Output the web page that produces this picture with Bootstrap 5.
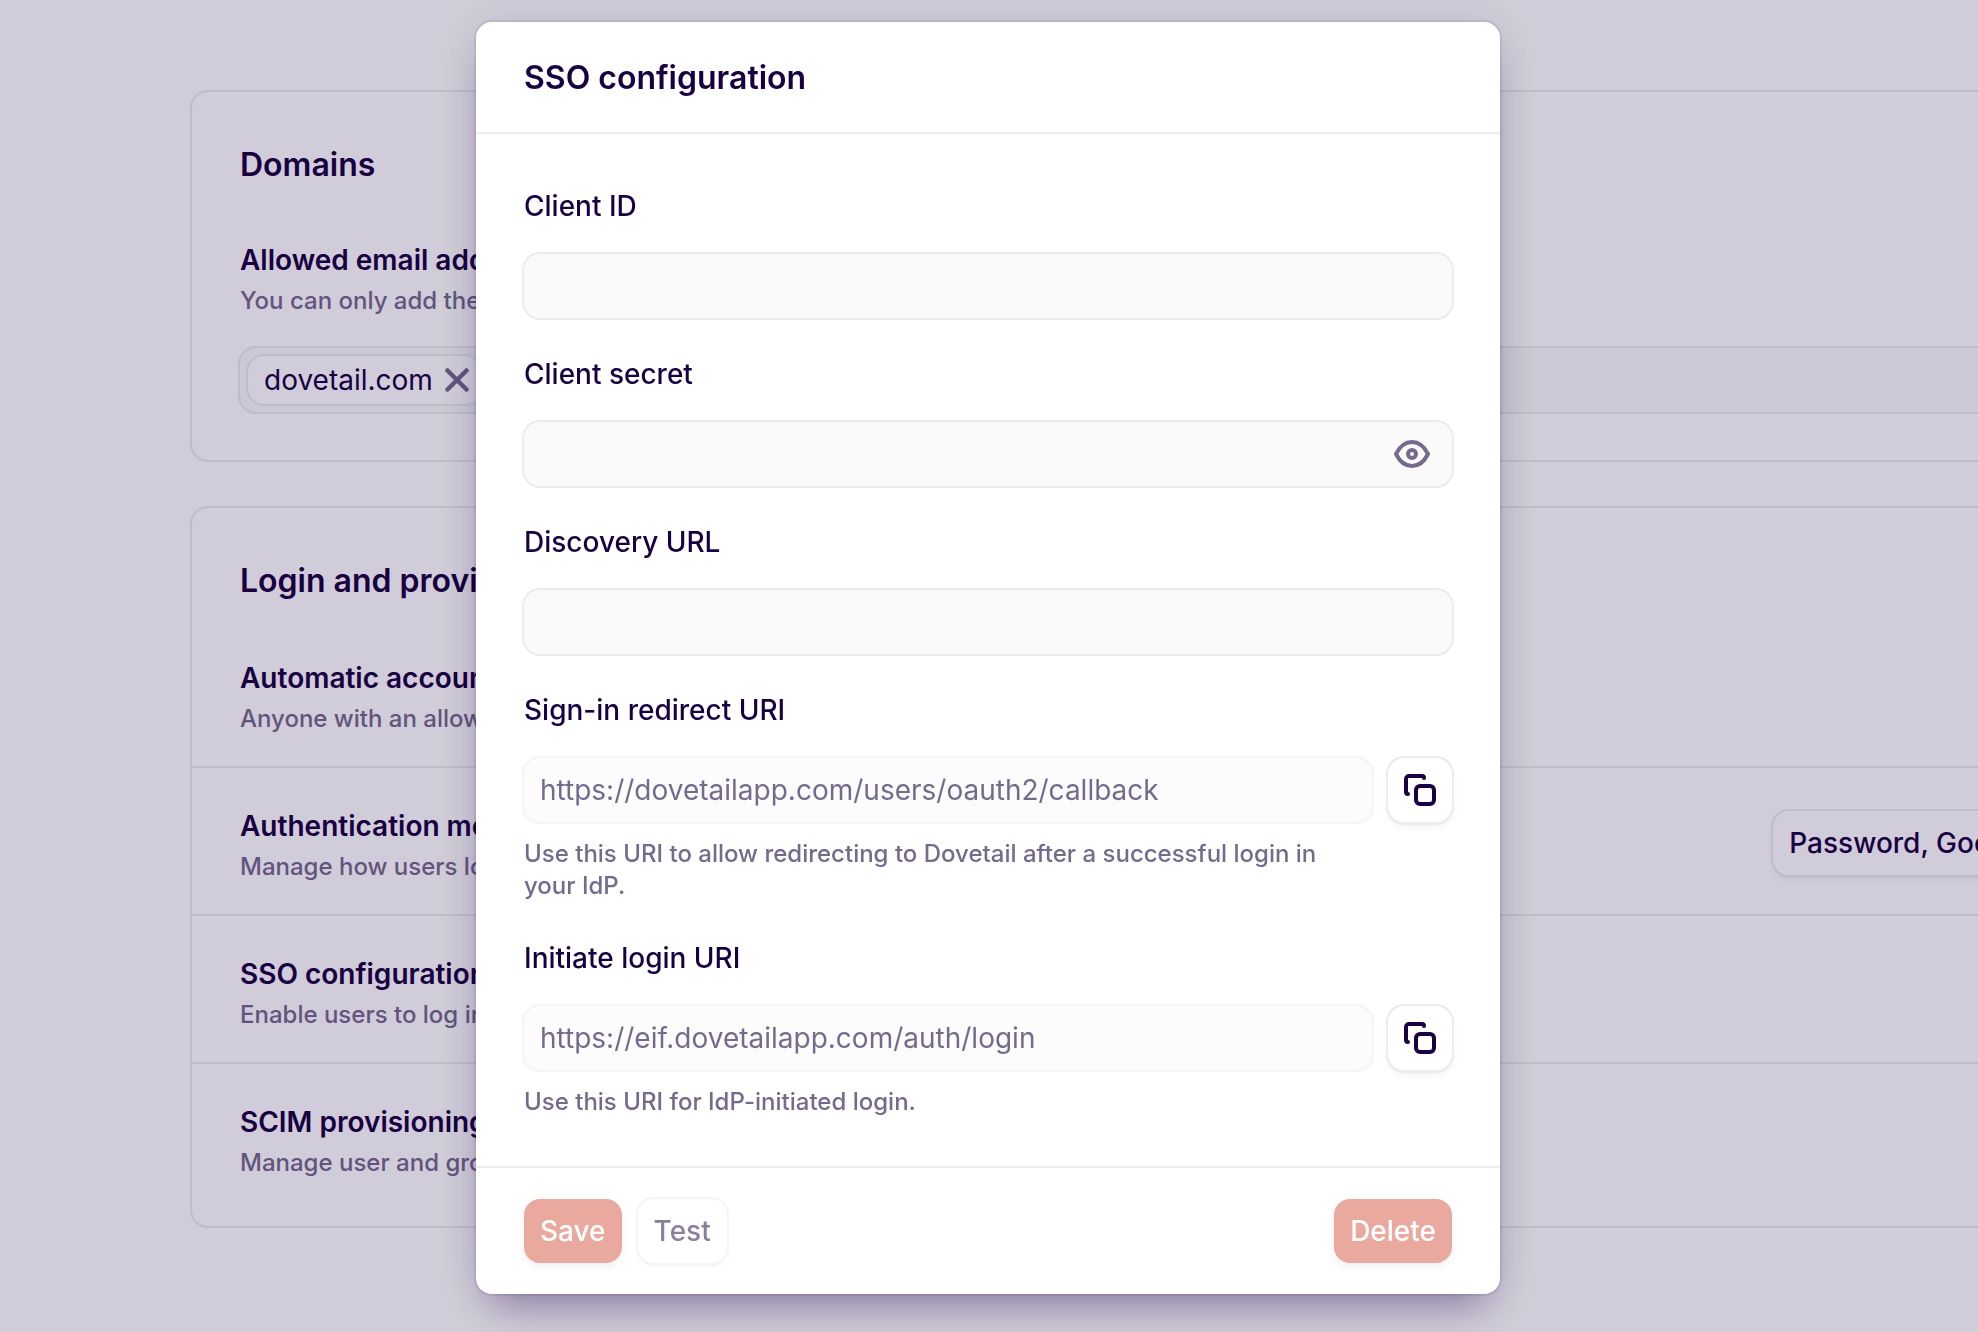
<!DOCTYPE html>
<html lang="en">
<head>
<meta charset="utf-8">
<meta name="viewport" content="width=device-width, initial-scale=1">
<title>SSO configuration</title>
<link href="https://cdn.jsdelivr.net/npm/bootstrap@5.3.0/dist/css/bootstrap.min.css" rel="stylesheet">
<style>
  :root { --ink: #180042; --muted: #756a8c; --line: #ebebf0; --ring: 0 0 0 2px var(--line); }
  body { font-family: Inter, "Liberation Sans", sans-serif; font-size: 28px; line-height: 48px; color: var(--ink); }
  .page { height: 100vh; }
  .settings { padding: 90px 0 0 190px; margin-right: -193px; }
  .panel { border: 2px solid var(--line); border-radius: 18px; margin-bottom: 44px; }
  .panel-title, .modal-title { font-size: 32px; line-height: 48px; font-weight: 620; }
  .panel-title { padding: 49px 48px 15px; margin: 0; }
  .panel-part { padding: 32px 48px 48px; }
  .setting { padding: 34px 48px 30px; }
  .setting + .setting { border-top: 2px solid var(--line); }
  .setting:last-child { padding-bottom: 46px; }
  .setting-name { font-size: 28px; line-height: 48px; font-weight: 600; margin: 0; }
  .hint { font-size: 24px; line-height: 32px; font-weight: 500; color: var(--muted); margin: 0; }
  .panel .hint { line-height: 34px; }
  .domain-box { height: 64px; margin-top: 30px; padding: 0 8px; border-radius: 16px; background: #fafafa; box-shadow: var(--ring); }
  .chip { height: 48px; padding: 0 12px 0 16px; gap: 12px; border-radius: 16px; background: #fff; box-shadow: var(--ring); }
  .plain { border: 0; background: none; padding: 0; line-height: 0; color: var(--muted); }
  .btn { height: 64px; padding: 0 16px; border: 0; border-radius: 16px; font-size: 28px; line-height: 64px; font-weight: 550; color: var(--ink); }
  .btn-outline { background: #fff; box-shadow: var(--ring), 0 2px 2px rgba(24,0,66,.16), 0 4px 8px rgba(24,0,66,.06); }
  .btn:disabled { opacity: 1; }
  .btn-outline:disabled { background: #fff; color: #8b7fa0; box-shadow: 0 0 0 2px #f5f5f7, 0 2px 2px rgba(24,0,66,.08), 0 4px 8px rgba(24,0,66,.03); }
  .btn-coral:disabled { background: #e9a99f; color: #fff; box-shadow: 0 4px 8px rgba(24,0,66,.06); }
  .btn-copy { width: 64px; padding: 0; }
  .modal-backdrop { --bs-backdrop-bg: #180042; --bs-backdrop-opacity: .2; }
  .modal { --bs-modal-width: 1024px; --bs-modal-margin: 22px; padding-right: 2px; }
  .modal-content { border: 0; border-radius: 16px; color: var(--ink); box-shadow: 0 0 0 2px rgba(24,0,66,.08), 0 0 48px rgba(24,0,66,.09), 0 24px 40px -16px rgba(50,20,90,.45); }
  .modal-header { padding: 32px 48px 30px; border-bottom: 2px solid var(--line); }
  .modal-body { padding: 48px; gap: 32px; }
  .modal-footer { padding: 31px 48px; gap: 16px; border-top: 2px solid var(--line); }
  .modal-footer > * { margin: 0; }
  .form-label { display: block; margin: 0 0 24px; font-weight: 450; }
  .form-control { height: 64px; padding: 0 16px; border: 0; border-radius: 16px; font-size: 28px; line-height: 64px; background: #fafafa; box-shadow: var(--ring); color: var(--ink); }
  .form-control:disabled { background: #fcfcfc; color: var(--muted); box-shadow: 0 0 0 2px #f5f5f6; }
  .field-note { margin: 16px 80px 0 0; }
  .reveal { position: absolute; right: 22px; top: 18px; }
</style>
</head>
<body>
<div class="page overflow-hidden">
<main class="settings">
  <section class="panel">
    <h2 class="panel-title">Domains</h2>
    <div class="panel-part">
      <h3 class="setting-name">Allowed email addresses</h3>
      <p class="hint">You can only add the domains of your own team.</p>
      <div class="domain-box d-flex align-items-center">
        <span class="chip d-inline-flex align-items-center">dovetail.com
          <button type="button" class="plain" aria-label="Remove domain"><svg width="24" height="24" viewBox="0 0 24 24" fill="none" stroke="currentColor" stroke-width="4.500" stroke-linecap="round"><path d="M2.500 2.500l19 19M21.500 2.500l-19 19"/></svg></button>
        </span>
      </div>
    </div>
  </section>
  <section class="panel">
    <h2 class="panel-title">Login and provisioning</h2>
    <div class="setting"><h3 class="setting-name">Automatic account creation</h3><p class="hint">Anyone with an allowed email can join.</p></div>
    <div class="setting d-flex justify-content-between align-items-center">
      <div><h3 class="setting-name">Authentication methods</h3><p class="hint">Manage how users log in.</p></div>
      <button type="button" class="btn btn-outline">Password, Google, SSO</button>
    </div>
    <div class="setting"><h3 class="setting-name">SSO configuration</h3><p class="hint">Enable users to log in with SSO.</p></div>
    <div class="setting"><h3 class="setting-name">SCIM provisioning</h3><p class="hint">Manage user and group access.</p></div>
  </section>
</main>
</div>

<div class="modal-backdrop show"></div>
<div class="modal d-block" role="dialog" aria-modal="true" aria-labelledby="ssoTitle">
  <div class="modal-dialog">
    <form class="modal-content">
      <div class="modal-header"><h1 class="modal-title" id="ssoTitle">SSO configuration</h1></div>
      <div class="modal-body d-flex flex-column">
        <div><label class="form-label" for="clientId">Client ID</label><input class="form-control" type="text" id="clientId"></div>
        <div>
          <label class="form-label" for="clientSecret">Client secret</label>
          <div class="position-relative">
            <input class="form-control" type="password" id="clientSecret">
            <button type="button" class="plain reveal" aria-label="Show secret"><svg width="36" height="28" viewBox="0 0 36 28" fill="none" stroke="currentColor" stroke-width="4" stroke-linejoin="round"><path d="M2 14C6 6 12 2 18 2s12 4 16 12c-4 8-10 12-16 12S6 22 2 14Z"/><circle cx="18" cy="14" r="4"/></svg></button>
          </div>
        </div>
        <div><label class="form-label" for="discovery">Discovery URL</label><input class="form-control" type="text" id="discovery"></div>
        <div>
          <label class="form-label" for="redirectUri">Sign-in redirect URI</label>
          <div class="d-flex gap-3">
            <input class="form-control" type="text" id="redirectUri" value="https://dovetailapp.com/users/oauth2/callback" disabled>
            <button type="button" class="btn btn-outline btn-copy flex-shrink-0 d-flex align-items-center justify-content-center" aria-label="Copy redirect URI"><svg width="32" height="32" viewBox="0 0 32 32" fill="none" stroke="currentColor" stroke-width="4" stroke-linecap="round"><rect x="12" y="12" width="18" height="18" rx="4"/><path d="M4 20a2 2 0 0 1-2-2V5a3 3 0 0 1 3-3h13a2 2 0 0 1 2 2"/></svg></button>
          </div>
          <p class="hint field-note">Use this URI to allow redirecting to Dovetail after a successful login in your IdP.</p>
        </div>
        <div>
          <label class="form-label" for="loginUri">Initiate login URI</label>
          <div class="d-flex gap-3">
            <input class="form-control" type="text" id="loginUri" value="https://eif.dovetailapp.com/auth/login" disabled>
            <button type="button" class="btn btn-outline btn-copy flex-shrink-0 d-flex align-items-center justify-content-center" aria-label="Copy login URI"><svg width="32" height="32" viewBox="0 0 32 32" fill="none" stroke="currentColor" stroke-width="4" stroke-linecap="round"><rect x="12" y="12" width="18" height="18" rx="4"/><path d="M4 20a2 2 0 0 1-2-2V5a3 3 0 0 1 3-3h13a2 2 0 0 1 2 2"/></svg></button>
          </div>
          <p class="hint field-note">Use this URI for IdP-initiated login.</p>
        </div>
      </div>
      <div class="modal-footer justify-content-start">
        <button type="submit" class="btn btn-coral" disabled>Save</button>
        <button type="button" class="btn btn-outline" disabled>Test</button>
        <button type="button" class="btn btn-coral ms-auto" disabled>Delete</button>
      </div>
    </form>
  </div>
</div>
<script src="https://cdn.jsdelivr.net/npm/bootstrap@5.3.0/dist/js/bootstrap.bundle.min.js"></script>
</body>
</html>
